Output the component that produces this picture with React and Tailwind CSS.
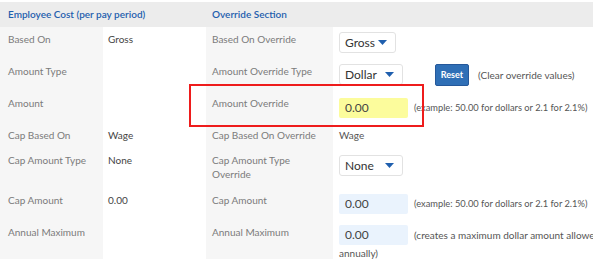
import React from "react";

const Caret = () => (
  <svg width="9" height="5" viewBox="0 0 9 5" className="block">
    <path d="M0 0 H9 L4.5 5 Z" fill="#1f5fae" />
  </svg>
);

const Select = ({ value, w }) => (
  <div
    className={`flex items-center justify-between h-[21px] ${w} border border-[#e2e2e2] rounded-[3px] bg-white pl-[5px] pr-[8px] text-[12px] text-[#333]`}
  >
    <span>{value}</span>
    <Caret />
  </div>
);

const Input = ({ value, yellow }) => (
  <div
    className={`inline-flex items-center align-top h-[20px] w-[69px] rounded-[2px] pl-[6px] text-[12px] text-[#444] ${
      yellow ? "bg-[#fcfc9c]" : "bg-[#eaf3fd]"
    }`}
  >
    {value}
  </div>
);

const Label = ({ children, cls = "" }) => (
  <div className={`bg-[#f6f6f6] pl-[8px] pt-[5px] text-[10px] leading-[14px] text-[#7b7b7b] ${cls}`}>{children}</div>
);
const Val = ({ children, cls = "" }) => (
  <div className={`bg-white pl-[5px] pt-[5px] text-[10px] leading-[14px] text-[#444] ${cls}`}>{children}</div>
);
const OLabel = ({ children, cls = "" }) => (
  <div className={`bg-[#f6f6f6] pl-[6px] pt-[5px] text-[10px] leading-[14px] text-[#7b7b7b] ${cls}`}>{children}</div>
);
const OVal = ({ children, cls = "" }) => (
  <div className={`bg-white pl-[6px] text-[10px] leading-[14px] text-[#555] ${cls}`}>{children}</div>
);

export default function App() {
  return (
    <div
      className="relative w-[593px] h-[259px] overflow-hidden bg-white pt-[2px]"
      style={{ fontFamily: "Lato, 'Open Sans', Arial, sans-serif" }}
    >
      <div className="grid grid-cols-[103px_103px_127px_1fr] w-[620px]">
        <div className="col-span-2 h-[25px] bg-[#ececec] pl-[8px] flex items-center text-[10px] font-semibold text-[#1f5fae]">
          Employee Cost (per pay period)
        </div>
        <div className="col-span-2 h-[25px] bg-[#ececec] pl-[6px] flex items-center text-[10px] font-semibold text-[#1f5fae]">
          Override Section
        </div>

        {/* Row 1 */}
        <Label cls="h-[32px]">Based On</Label>
        <Val>Gross</Val>
        <OLabel>Based On Override</OLabel>
        <OVal cls="pt-[5px]">
          <Select value="Gross" w="w-[57px]" />
        </OVal>

        {/* Row 2 */}
        <Label cls="h-[32px]">Amount Type</Label>
        <Val></Val>
        <OLabel>Amount Override Type</OLabel>
        <OVal cls="pt-[5px] flex items-start">
          <Select value="Dollar" w="w-[64px]" />
          <button className="ml-[32px] h-[22px] w-[34px] rounded-[2px] border border-[#25589a] bg-[#2f6fb6] text-[9px] font-bold text-white">
            Reset
          </button>
          <span className="ml-[9px] mt-[4px] text-[10px] text-[#555]">(Clear override values)</span>
        </OVal>

        {/* Row 3 */}
        <Label cls="h-[32px]">Amount</Label>
        <Val></Val>
        <OLabel>Amount Override</OLabel>
        <OVal cls="pt-[7px] flex items-start">
          <Input value="0.00" yellow />
          <span className="ml-[6px] mt-[3px] text-[9.3px] text-[#555] whitespace-nowrap">
            (example: 50.00 for dollars or 2.1 for 2.1%)
          </span>
        </OVal>

        {/* Row 4 */}
        <Label cls="h-[25px]">Cap Based On</Label>
        <Val>Wage</Val>
        <OLabel>Cap Based On Override</OLabel>
        <OVal cls="pt-[5px] text-[#444]">Wage</OVal>

        {/* Row 5 */}
        <Label cls="h-[40px]">Cap Amount Type</Label>
        <Val>None</Val>
        <OLabel>
          Cap Amount Type
          <br />
          Override
        </OLabel>
        <OVal cls="pt-[7px]">
          <Select value="None" w="w-[64px]" />
        </OVal>

        {/* Row 6 */}
        <Label cls="h-[32px]">Cap Amount</Label>
        <Val>0.00</Val>
        <OLabel>Cap Amount</OLabel>
        <OVal cls="pt-[6px] flex items-start">
          <Input value="0.00" />
          <span className="ml-[6px] mt-[3px] text-[9.3px] text-[#555] whitespace-nowrap">
            (example: 50.00 for dollars or 2.1 for 2.1%)
          </span>
        </OVal>

        {/* Row 7 */}
        <Label cls="h-[40px]">Annual Maximum</Label>
        <Val></Val>
        <OLabel>Annual Maximum</OLabel>
        <OVal cls="pt-[5px] text-[9.6px] leading-[14px]">
          <div className="flex items-start whitespace-nowrap">
            <Input value="0.00" />
            <span className="ml-[6px] mt-[3px] text-[#555]">(creates a maximum dollar amount allowed</span>
          </div>
          <div className="text-[#555] mt-[1px]">annually)</div>
        </OVal>
      </div>

      <div className="absolute left-[189px] top-[84px] w-[235px] h-[43px] border-2 border-[#ee1c1c] pointer-events-none" />
    </div>
  );
}
